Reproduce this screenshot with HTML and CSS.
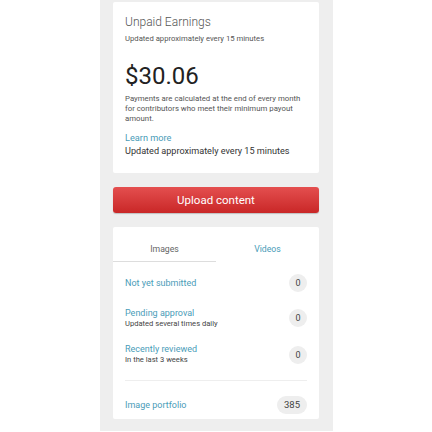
FILE: index.html
```html
<!DOCTYPE html>
<html lang="en">
<head>
	<meta charset="UTF-8">
	<title>Earnings</title>
	<link rel="stylesheet" href="styles.css">
</head>
<body>
	<div class="column">
		<div class="card earnings">
			<h2 class="title">Unpaid Earnings</h2>
			<p class="note">Updated approximately every 15 minutes</p>
			<div class="amount">$30.06</div>
			<p class="info">Payments are calculated at the end of every month for contributors who meet their minimum payout amount.</p>
			<a class="learn" href="#">Learn more</a>
			<p class="updated">Updated approximately every 15 minutes</p>
		</div>

		<button class="upload">Upload content</button>

		<div class="card content">
			<div class="tabs">
				<div class="tab active">Images</div>
				<div class="tab">Videos</div>
			</div>
			<ul class="rows">
				<li class="row">
					<div>
						<a class="label" href="#">Not yet submitted</a>
					</div>
					<span class="count">0</span>
				</li>
				<li class="row">
					<div>
						<a class="label" href="#">Pending approval</a>
						<p class="sub">Updated several times daily</p>
					</div>
					<span class="count">0</span>
				</li>
				<li class="row">
					<div>
						<a class="label" href="#">Recently reviewed</a>
						<p class="sub">In the last 3 weeks</p>
					</div>
					<span class="count">0</span>
				</li>
				<li class="row portfolio">
					<div>
						<a class="label" href="#">Image portfolio</a>
					</div>
					<span class="count wide">385</span>
				</li>
			</ul>
		</div>
	</div>
</body>
</html>
```

FILE: styles.css
```css
html,body{margin:0;padding:0;background:#fff;}
body{font-family:Roboto,"Liberation Sans",sans-serif;color:#333;}
p,h2,ul,li{margin:0;padding:0;list-style:none;}
a{text-decoration:none;}

.column{
	width:206px;
	margin-left:100px;
	padding:2px 14px 12px 13px;
	background:#eeeeee;
}

.card{background:#fff;border-radius:2px;}

.earnings{padding:13px 12px 16px;}
.earnings .title{font-size:12px;font-weight:300;color:#555;line-height:14px;}
.earnings .note{font-size:7.7px;color:#555;margin-top:4.5px;line-height:9px;}
.earnings .amount{font-size:24px;color:#222;margin-top:19.5px;line-height:28px;}
.earnings .info{font-size:7.8px;line-height:10px;color:#555;margin-top:4px;max-width:178px;}
.earnings .learn{display:block;font-size:9.2px;color:#4a9cb8;margin-top:8px;line-height:12px;}
.earnings .updated{font-size:9.1px;color:#333;line-height:12px;margin-top:1px;}

.upload{
	display:block;
	width:206px;
	height:26px;
	margin-top:14px;
	border:0;
	border-radius:3px;
	background:linear-gradient(#e44f4f,#c92727);
	color:#fff;
	font-family:Roboto,"Liberation Sans",sans-serif;
	font-size:11.5px;
	box-shadow:0 1px 1px rgba(0,0,0,.2);
}

.content{margin-top:14px;padding-bottom:5px;}
.tabs{display:flex;height:34px;}
.tab{width:103px;text-align:center;font-size:8.7px;color:#4a9cb8;line-height:12px;padding-top:16px;box-sizing:border-box;}
.tab.active{color:#666;border-bottom:1px solid #ddd;height:35px;}

.rows{padding:13px 12px 0;}
.row{display:flex;justify-content:space-between;align-items:center;}
.row + .row{margin-top:15.5px;}
.row .label{display:block;font-size:9px;color:#4a9cb8;line-height:11px;}
.row .sub{font-size:7.6px;color:#444;line-height:10px;}
.count{
	display:block;
	width:18px;
	height:18px;
	border-radius:9px;
	background:#eeeeee;
	color:#444;
	font-size:9px;
	line-height:18px;
	text-align:center;
}
.count.wide{width:30px;font-size:9.5px;}
.row.portfolio{border-top:1px solid #eee;margin-top:15px;padding-top:15px;}
```
